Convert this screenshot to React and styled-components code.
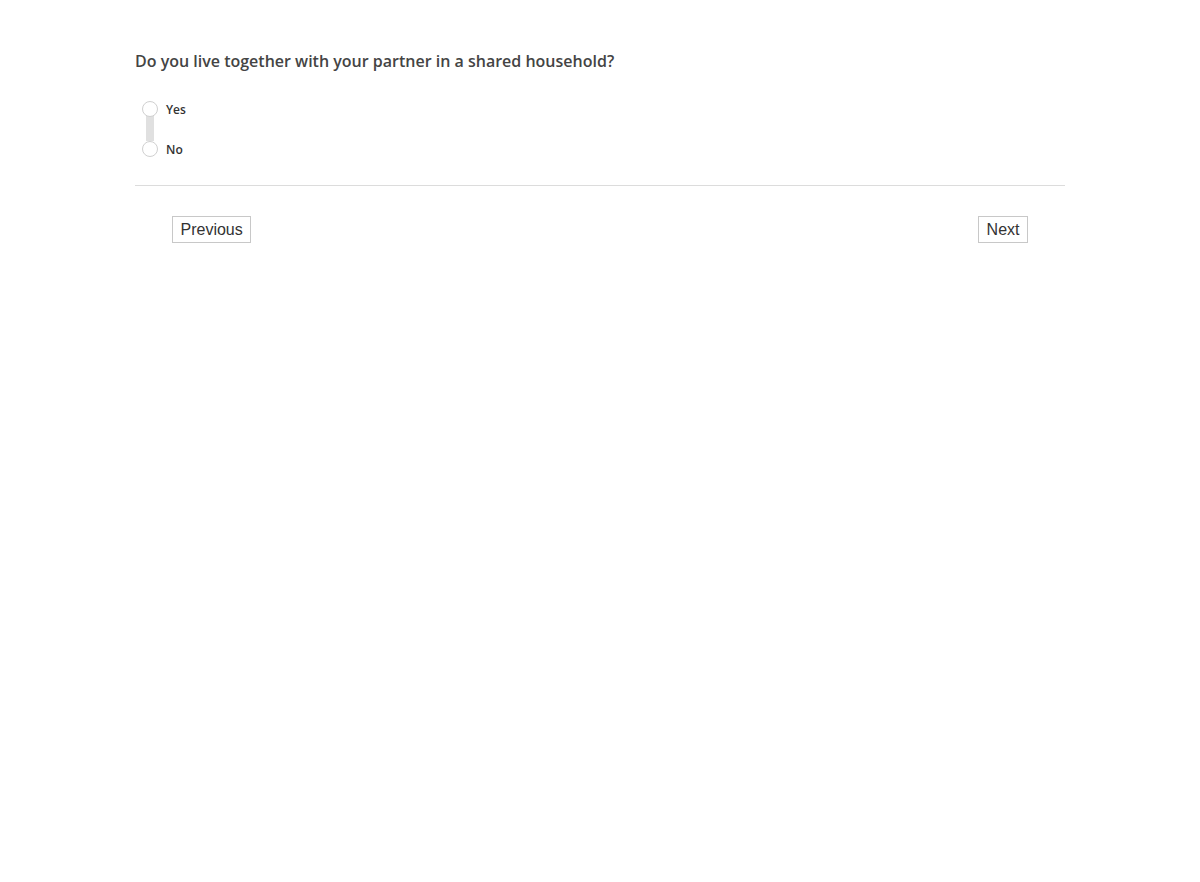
import React, { useState } from "react"
import styled, { createGlobalStyle } from "styled-components"

const GlobalStyle = createGlobalStyle`
  html, body {
    margin: 0;
    padding: 0;
    background: #fff;
  }
  body {
    font-family: "Open Sans", "Liberation Sans", sans-serif;
  }
`

const options = ["Yes", "No"]

const App = () => {
  const [value, setValue] = useState(null)

  return (
    <>
      <GlobalStyle />
      <Page>
        <Question>Do you live together with your partner in a shared household?</Question>

        <Choices>
          <Rail />
          {options.map(opt => (
            <Choice key={opt} onClick={() => setValue(opt)}>
              <Radio checked={value === opt} />
              <ChoiceLabel>{opt}</ChoiceLabel>
            </Choice>
          ))}
        </Choices>

        <Divider />

        <Nav>
          <NavButton type="button">Previous</NavButton>
          <NavButton type="button">Next</NavButton>
        </Nav>
      </Page>
    </>
  )
}

export default App

const Page = styled.div`
  width: 930px;
  margin: 0 auto;
  padding-top: 50px;
`

const Question = styled.h2`
  margin: 0;
  font-size: 16px;
  line-height: 22px;
  font-weight: 600;
  color: #444;
`

const Choices = styled.div`
  position: relative;
  display: flex;
  flex-direction: column;
  gap: 24px;
  margin-top: 29px;
  padding-left: 7px;
`

const Rail = styled.div`
  position: absolute;
  left: 11px;
  top: 10px;
  width: 8px;
  height: 30px;
  background: #e0e0e0;
`

const Choice = styled.label`
  position: relative;
  display: flex;
  align-items: center;
  gap: 8px;
  height: 16px;
  cursor: pointer;
`

const Radio = styled.span`
  box-sizing: border-box;
  width: 16px;
  height: 16px;
  border-radius: 50%;
  border: 1px solid #d0d0d0;
  background: ${p => (p.checked ? "#4a90d9" : "#fff")};
`

const ChoiceLabel = styled.span`
  font-size: 12px;
  font-weight: 600;
  color: #333;
`

const Divider = styled.hr`
  margin: 28px 0 0;
  border: 0;
  border-top: 1px solid #dcdcdc;
`

const Nav = styled.div`
  display: flex;
  justify-content: space-between;
  padding: 30px 37px 0;
`

const NavButton = styled.button`
  box-sizing: border-box;
  height: 27px;
  padding: 0 7.5px;
  font-family: "Liberation Sans", Arial, sans-serif;
  font-size: 16px;
  color: #333;
  background: #fff;
  border: 1px solid #c8c8c8;
  border-radius: 0;
  cursor: pointer;
`
